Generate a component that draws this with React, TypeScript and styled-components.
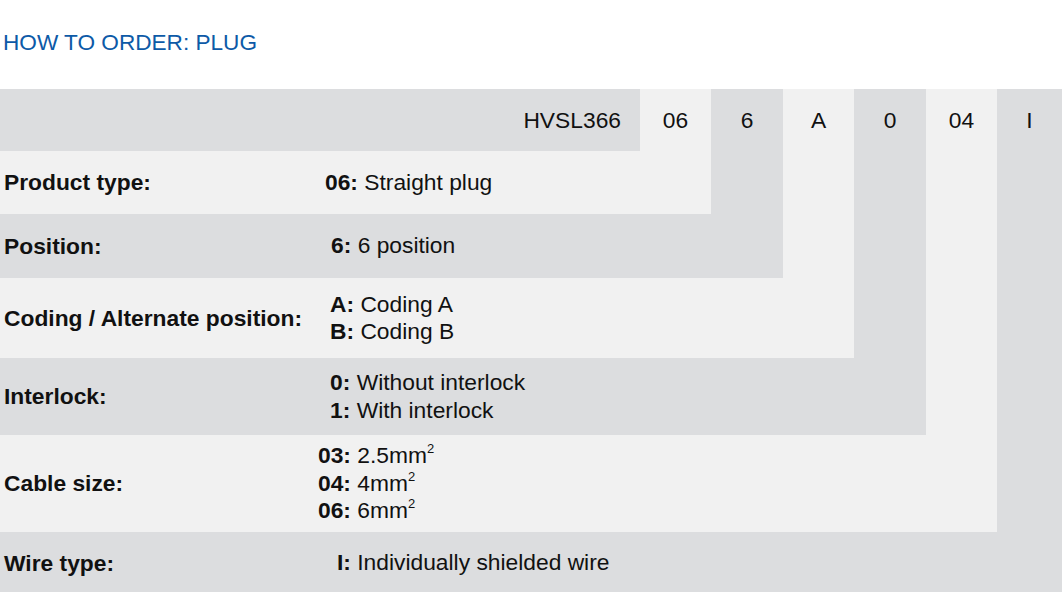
import React from "react";
import styled, { createGlobalStyle } from "styled-components";

const GlobalStyle = createGlobalStyle`
  html, body {
    margin: 0;
    padding: 0;
    background: #ffffff;
    overflow: hidden;
  }
  body {
    font-family: "Liberation Sans", Arial, sans-serif;
    color: #111111;
  }
`;

const DARK = "#dcdddf";
const LIGHT = "#f1f1f1";

type Tone = "light" | "dark";

const Page = styled.div`
  width: 1062px;
`;

const Title = styled.h1`
  box-sizing: border-box;
  height: 89px;
  margin: 0;
  padding: 32px 0 0 3px;
  font-size: 22.6px;
  line-height: 22.6px;
  font-weight: 400;
  color: #0d5aa7;
`;

const Table = styled.div`
  display: grid;
  grid-template-columns: 640px 71px 72px 71px 72px 71px 1fr;
  grid-template-rows: 62px 63px 64px 80px 77px 97px 62px;
  font-size: 22.8px;
`;

const PrefixCell = styled.div`
  grid-column: 1;
  grid-row: 1;
  background: ${DARK};
  display: flex;
  align-items: center;
  justify-content: flex-end;
  padding-right: 19px;
`;

const Strip = styled.div<{ $col: number; $span: number; $tone: Tone }>`
  grid-column: ${(p) => p.$col};
  grid-row: 1 / span ${(p) => p.$span};
  background: ${(p) => (p.$tone === "dark" ? DARK : LIGHT)};
  display: flex;
  flex-direction: column;
`;

const StripCode = styled.div`
  height: 62px;
  display: flex;
  align-items: center;
  justify-content: center;
`;

const Row = styled.div<{ $row: number; $span: number; $tone: Tone }>`
  grid-column: 1 / span ${(p) => p.$span};
  grid-row: ${(p) => p.$row};
  background: ${(p) => (p.$tone === "dark" ? DARK : LIGHT)};
  display: flex;
  align-items: center;
`;

const Label = styled.div`
  flex: none;
  box-sizing: border-box;
  width: 310px;
  padding-left: 4px;
  font-weight: 700;
`;

const Value = styled.div<{ $indent: number }>`
  padding-left: ${(p) => p.$indent}px;
  line-height: 27.5px;
`;

const Line = styled.div`
  white-space: nowrap;
`;

const Code = styled.b`
  font-weight: 700;
`;

const Sup = styled.sup`
  font-size: 13px;
  line-height: 0;
  vertical-align: 10px;
`;

type Option = { code: string; text: React.ReactNode };
type Spec = { label: string; indent: number; options: Option[] };

const mm = (n: string) => (
  <>
    {n}mm<Sup>2</Sup>
  </>
);

const specs: Spec[] = [
  { label: "Product type:", indent: 15, options: [{ code: "06", text: "Straight plug" }] },
  { label: "Position:", indent: 21, options: [{ code: "6", text: "6 position" }] },
  {
    label: "Coding / Alternate position:",
    indent: 20,
    options: [
      { code: "A", text: "Coding A" },
      { code: "B", text: "Coding B" },
    ],
  },
  {
    label: "Interlock:",
    indent: 20,
    options: [
      { code: "0", text: "Without interlock" },
      { code: "1", text: "With interlock" },
    ],
  },
  {
    label: "Cable size:",
    indent: 8,
    options: [
      { code: "03", text: mm("2.5") },
      { code: "04", text: mm("4") },
      { code: "06", text: mm("6") },
    ],
  },
  { label: "Wire type:", indent: 27, options: [{ code: "I", text: "Individually shielded wire" }] },
];

const codes = ["06", "6", "A", "0", "04", "I"];

export default function App() {
  return (
    <Page>
      <GlobalStyle />
      <Title>HOW TO ORDER: PLUG</Title>
      <Table>
        <PrefixCell>HVSL366</PrefixCell>
        {codes.map((c, i) => (
          <Strip key={i} $col={i + 2} $span={i + 1} $tone={i % 2 === 0 ? "light" : "dark"}>
            <StripCode>{c}</StripCode>
          </Strip>
        ))}
        {specs.map((s, i) => (
          <Row key={s.label} $row={i + 2} $span={i + 2} $tone={i % 2 === 0 ? "light" : "dark"}>
            <Label>{s.label}</Label>
            <Value $indent={s.indent}>
              {s.options.map((o) => (
                <Line key={o.code}>
                  <Code>{o.code}:</Code> {o.text}
                </Line>
              ))}
            </Value>
          </Row>
        ))}
      </Table>
    </Page>
  );
}
